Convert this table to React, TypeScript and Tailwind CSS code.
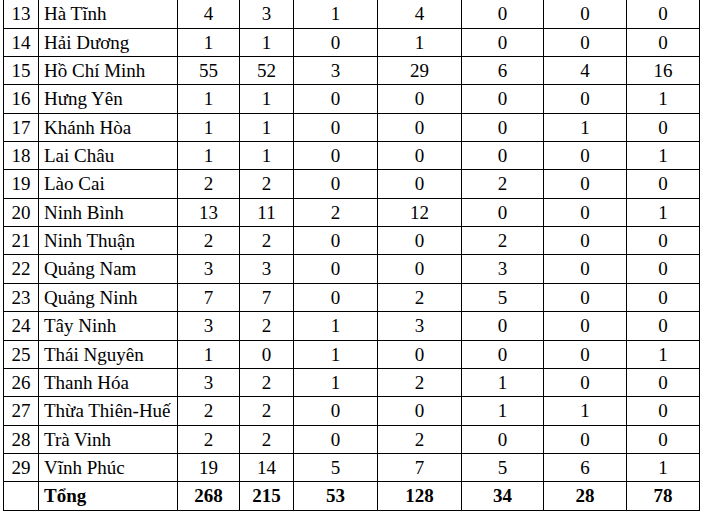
import React from "react";

const rows: [string, string, number[]][] = [
  ["13", "Hà Tĩnh", [4, 3, 1, 4, 0, 0, 0]],
  ["14", "Hải Dương", [1, 1, 0, 1, 0, 0, 0]],
  ["15", "Hồ Chí Minh", [55, 52, 3, 29, 6, 4, 16]],
  ["16", "Hưng Yên", [1, 1, 0, 0, 0, 0, 1]],
  ["17", "Khánh Hòa", [1, 1, 0, 0, 0, 1, 0]],
  ["18", "Lai Châu", [1, 1, 0, 0, 0, 0, 1]],
  ["19", "Lào Cai", [2, 2, 0, 0, 2, 0, 0]],
  ["20", "Ninh Bình", [13, 11, 2, 12, 0, 0, 1]],
  ["21", "Ninh Thuận", [2, 2, 0, 0, 2, 0, 0]],
  ["22", "Quảng Nam", [3, 3, 0, 0, 3, 0, 0]],
  ["23", "Quảng Ninh", [7, 7, 0, 2, 5, 0, 0]],
  ["24", "Tây Ninh", [3, 2, 1, 3, 0, 0, 0]],
  ["25", "Thái Nguyên", [1, 0, 1, 0, 0, 0, 1]],
  ["26", "Thanh Hóa", [3, 2, 1, 2, 1, 0, 0]],
  ["27", "Thừa Thiên-Huế", [2, 2, 0, 0, 1, 1, 0]],
  ["28", "Trà Vinh", [2, 2, 0, 2, 0, 0, 0]],
  ["29", "Vĩnh Phúc", [19, 14, 5, 7, 5, 6, 1]],
];

const heights = [
  "h-[29px]", "h-[28px]", "h-[28px]", "h-[29px]", "h-[28px]", "h-[28px]",
  "h-[29px]", "h-[28px]", "h-[28px]", "h-[29px]", "h-[28px]", "h-[29px]",
  "h-[28px]", "h-[28px]", "h-[29px]", "h-[28px]", "h-[28px]", "h-[29px]",
];

const cols =
  "grid grid-cols-[35px_139px_62px_54px_84px_84px_82px_83px_73px] border-r border-black";

export default function App() {
  const totals = [268, 215, 53, 128, 34, 28, 78];
  return (
    <div
      className="w-[702px] h-[514px] bg-white text-black overflow-hidden"
      style={{ fontFamily: '"Liberation Serif", "Times New Roman", serif' }}
    >
      <div className="ml-[3px] w-[697px] text-[19px] leading-none">
        {rows.map(([no, name, vals], i) => (
          <div key={no} className={`${cols} border-b border-black ${heights[i]}`}>
            <div className="border-l border-black flex items-center justify-center pb-[1px]">{no}</div>
            <div className="border-l border-black flex items-center pl-[5px] pb-[1px] whitespace-nowrap">{name}</div>
            {vals.map((v, j) => (
              <div key={j} className="border-l border-black flex items-center justify-center pb-[1px]">
                {v}
              </div>
            ))}
          </div>
        ))}
        <div className={`${cols} border-b border-black ${heights[17]} font-bold`}>
          <div className="border-l border-black"></div>
          <div className="border-l border-black flex items-center pl-[5px] pb-[1px]">Tổng</div>
          {totals.map((v, j) => (
            <div key={j} className="border-l border-black flex items-center justify-center pb-[1px]">
              {v}
            </div>
          ))}
        </div>
      </div>
    </div>
  );
}
